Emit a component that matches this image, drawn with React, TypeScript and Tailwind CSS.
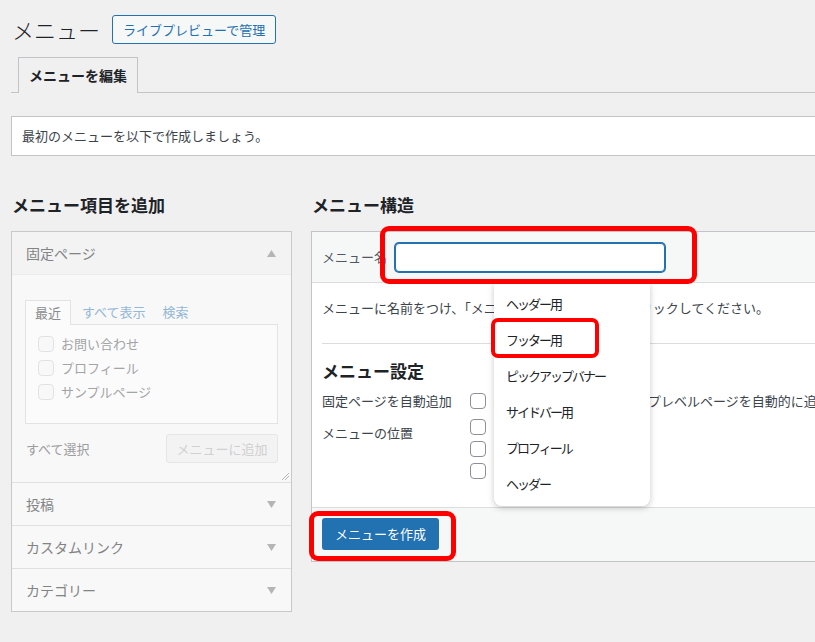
import type { ReactNode } from "react";

const font = "font-['Noto_Sans_CJK_JP','Noto_Sans',sans-serif]";

function Box({ faded }: { faded?: boolean }) {
  return (
    <span
      className={`block w-[16px] h-[16px] rounded-[4px] border shrink-0 ${
        faded ? "border-[#e2e2e2] bg-[#f8f8f8]" : "border-[#8c8f94] bg-white"
      }`}
    />
  );
}

function Tri({ up }: { up?: boolean }) {
  return (
    <svg width="9" height="7" viewBox="0 0 9 7" className="shrink-0">
      <polygon points={up ? "0,7 4.5,0 9,7" : "0,0 9,0 4.5,7"} fill="#b4b5b7" />
    </svg>
  );
}

function Row({ children }: { children: ReactNode }) {
  return (
    <div className="h-[43px] border-t border-[#e0e0e1] flex items-center justify-between pl-[14px] pr-[15px] text-[14px] text-[#828384]">
      <span>{children}</span>
      <Tri />
    </div>
  );
}

const options = ["ヘッダー用", "フッター用", "ピックアップバナー", "サイドバー用", "プロフィール", "ヘッダー"];

export default function App() {
  return (
    <div className={`relative w-[815px] h-[642px] overflow-hidden bg-[#f0f0f1] text-[#3c434a] ${font}`}>
      <div className="w-[880px] pl-[11px] pt-[15px]">
        {/* page title */}
        <div className="flex items-center h-[29px]">
          <h1 className="pl-px text-[22px] leading-[29px] font-light text-[#1d2327]">メニュー</h1>
          <button className="ml-[12px] h-[29px] px-[10px] border border-[#2271b1] rounded-[3px] bg-[#f6f7f7] text-[13px] text-[#2271b1]">
            ライブプレビューで管理
          </button>
        </div>

        {/* tabs */}
        <div className="mt-[13px] h-[36px] flex items-end pl-[7px] border-b border-[#c3c4c7]">
          <div className="-mb-px h-[36px] px-[10px] flex items-center border border-b-0 border-[#c3c4c7] bg-[#f0f0f1] text-[14px] font-bold text-[#1d2327]">
            メニューを編集
          </div>
        </div>

        {/* notice */}
        <div className="mt-[23px] h-[40px] flex items-center pl-[10px] bg-white border border-[#c3c4c7] text-[13px]">
          最初のメニューを以下で作成しましょう。
        </div>

        <div className="mt-[37px] flex gap-[19px]">
          {/* left column */}
          <div className="w-[281px] shrink-0">
            <h2 className="pl-px h-[24px] text-[17px] leading-[24px] font-bold text-[#1d2327] mb-[14px]">メニュー項目を追加</h2>
            <div className="border border-[#c8c9cb] bg-[#f8f8f8]">
              <div className="h-[42px] flex items-center justify-between pl-[14px] pr-[15px] bg-[#f3f3f4] text-[14px] text-[#828384]">
                <span>固定ページ</span>
                <Tri up />
              </div>
              <div className="relative border-t border-[#ececec] px-[13px] pt-[24px] pb-[19px]">
                <div className="h-[25px] flex items-end text-[13px]">
                  <div className="-mb-px h-[25px] px-[9px] flex items-center border border-b-0 border-[#e3e3e3] bg-[#fbfbfb] text-[#8a8b8c]">最近</div>
                  <span className="ml-[11px] text-[#93b7d6] leading-[24px]">すべて表示</span>
                  <span className="ml-[17px] text-[#93b7d6] leading-[24px]">検索</span>
                </div>
                <div className="h-[100px] border border-[#e3e3e3] bg-[#fbfbfb] pt-[7px] pl-[12px]">
                  {["お問い合わせ", "プロフィール", "サンプルページ"].map(t => (
                    <div key={t} className="h-[24px] flex items-center gap-[7px] text-[13px] text-[#a3a4a5]">
                      <Box faded />
                      <span>{t}</span>
                    </div>
                  ))}
                </div>
                <div className="mt-[10px] h-[29px] flex items-center justify-between">
                  <span className="pl-px text-[13px] text-[#9c9d9e]">すべて選択</span>
                  <button className="w-[112px] h-[29px] border border-[#e6e6e6] rounded-[3px] bg-[#f3f3f3] text-[13px] text-[#cfd0d1]">
                    メニューに追加
                  </button>
                </div>
                <svg width="8" height="8" viewBox="0 0 8 8" className="absolute right-[2px] bottom-[2px]">
                  <line x1="1" y1="8" x2="8" y2="1" stroke="#b8b8b8" />
                  <line x1="4" y1="8" x2="8" y2="4" stroke="#b8b8b8" />
                </svg>
              </div>
              <Row>投稿</Row>
              <Row>カスタムリンク</Row>
              <Row>カテゴリー</Row>
            </div>
          </div>

          {/* right column */}
          <div className="flex-1">
            <h2 className="pl-px h-[24px] text-[17px] leading-[24px] font-bold text-[#1d2327] mb-[14px]">メニュー構造</h2>
            <div className="border border-[#c3c4c7] bg-white">
              <div className="h-[51px] flex items-center gap-[8px] px-[10px] bg-[#f6f7f7] border-b border-[#dcdcde]">
                <span className="text-[13px] text-[#50575e]">メニュー名</span>
                <div className="w-[270px] h-[29px] rounded-[4px] border border-[#2271b1] shadow-[0_0_0_1px_#2271b1] bg-white" />
              </div>
              <div className="px-[10px]">
                <p className="mt-[15px] pb-[26px] text-[13px] leading-[19px]">
                  メニューに名前をつけ、「メニューを作成」ボタンをクリックしてください。
                </p>
                <div className="border-t border-[#dcdcde] pt-[15px] pb-[25px]">
                  <h3 className="h-[24px] text-[17px] leading-[24px] font-bold text-[#1d2327]">メニュー設定</h3>
                  <div className="mt-[7px] h-[22px] flex items-center text-[13px]">
                    <span className="w-[148px] shrink-0">固定ページを自動追加</span>
                    <Box />
                    <span className="ml-[6px] whitespace-nowrap">このメニューに新しいトップレベルページを自動的に追加</span>
                  </div>
                  <div className="mt-[4px] flex items-start text-[13px]">
                    <span className="w-[148px] shrink-0 mt-[7px] leading-[19px]">メニューの位置</span>
                    <div className="flex flex-col">
                      {["ヘッダー", "フッター", "モバイル"].map(t => (
                        <div key={t} className="h-[22px] flex items-center">
                          <Box />
                          <span className="ml-[9px]">{t}</span>
                        </div>
                      ))}
                    </div>
                  </div>
                </div>
              </div>
              <div className="h-[54px] border-t border-[#dcdcde] bg-[#f6f7f7] px-[10px] pt-[10px]">
                <button className="w-[117px] h-[32px] rounded-[3px] bg-[#2271b1] text-[13px] text-white">メニューを作成</button>
              </div>
            </div>
          </div>
        </div>
      </div>

      {/* datalist dropdown */}
      <div className="absolute left-[494px] top-[283px] w-[156px] h-[223px] bg-white rounded-b-[8px] shadow-[0_2px_6px_rgba(0,0,0,0.22)] pt-[3px]">
        {options.map(o => (
          <div key={o} className="h-[36px] flex items-center pl-[12px] text-[13px] tracking-[-2px] text-[#1d2327]">
            {o}
          </div>
        ))}
      </div>

      {/* annotation boxes */}
      <div className="absolute left-[380px] top-[226px] w-[317px] h-[58px] border-[5px] border-[#ff0000] rounded-[9px]" />
      <div className="absolute left-[491px] top-[318px] w-[108px] h-[40px] border-[4px] border-[#ff0000] rounded-[7px]" />
      <div className="absolute left-[309px] top-[511px] w-[147px] h-[50px] border-[5px] border-[#ff0000] rounded-[9px]" />
    </div>
  );
}
